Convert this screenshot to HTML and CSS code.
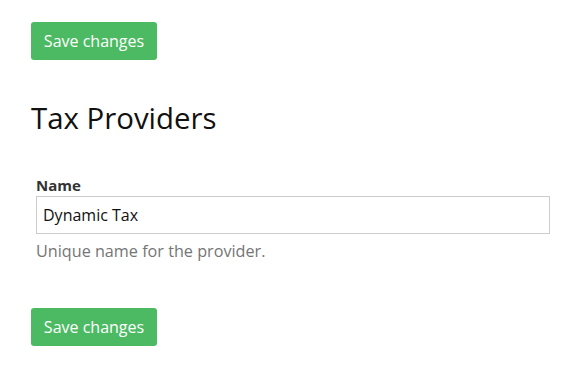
FILE: index.html
```html
<!DOCTYPE html>
<html>
<head>
<meta charset="utf-8">
<link rel="stylesheet" href="styles.css">
</head>
<body>
<div class="page">
  <button class="btn">Save changes</button>
  <h1 class="title">Tax Providers</h1>
  <div class="field">
    <label class="label" for="name">Name</label>
    <input class="input" id="name" type="text" value="Dynamic Tax">
    <p class="help">Unique name for the provider.</p>
  </div>
  <button class="btn btn-bottom">Save changes</button>
</div>
</body>
</html>
```

FILE: styles.css
```css
html, body {
  margin: 0;
  padding: 0;
  background: #fff;
}
.page {
  padding: 22px 17px 0 31px;
  font-family: "Open Sans", "Liberation Sans", sans-serif;
  color: #222;
  display: flex;
  flex-direction: column;
  align-items: flex-start;
}
.btn {
  height: 38px;
  width: 126px;
  padding: 0 0 1px 0;
  border: none;
  border-radius: 3px;
  background: #4cba63;
  color: #fff;
  font-family: "Open Sans", "Liberation Sans", sans-serif;
  font-size: 16px;
  line-height: 36px;
  cursor: pointer;
}
.title {
  margin: 40px 0 0 0;
  font-size: 29.4px;
  font-weight: 400;
  line-height: 36px;
  color: #111;
}
.field {
  align-self: stretch;
  margin: 39px 0 0 5px;
  display: flex;
  flex-direction: column;
}
.label {
  font-size: 15px;
  font-weight: 700;
  line-height: 20px;
  color: #333;
  margin-bottom: 1px;
}
.input {
  box-sizing: border-box;
  height: 38px;
  width: 514px;
  border: 1px solid #ccc;
  padding: 0 6px;
  font-family: "Open Sans", "Liberation Sans", sans-serif;
  font-size: 16px;
  color: #111;
  outline: none;
}
.help {
  margin: 6px 0 0 0;
  font-size: 16.2px;
  line-height: 22px;
  color: #757575;
}
.btn-bottom {
  margin-top: 46px;
}
```
